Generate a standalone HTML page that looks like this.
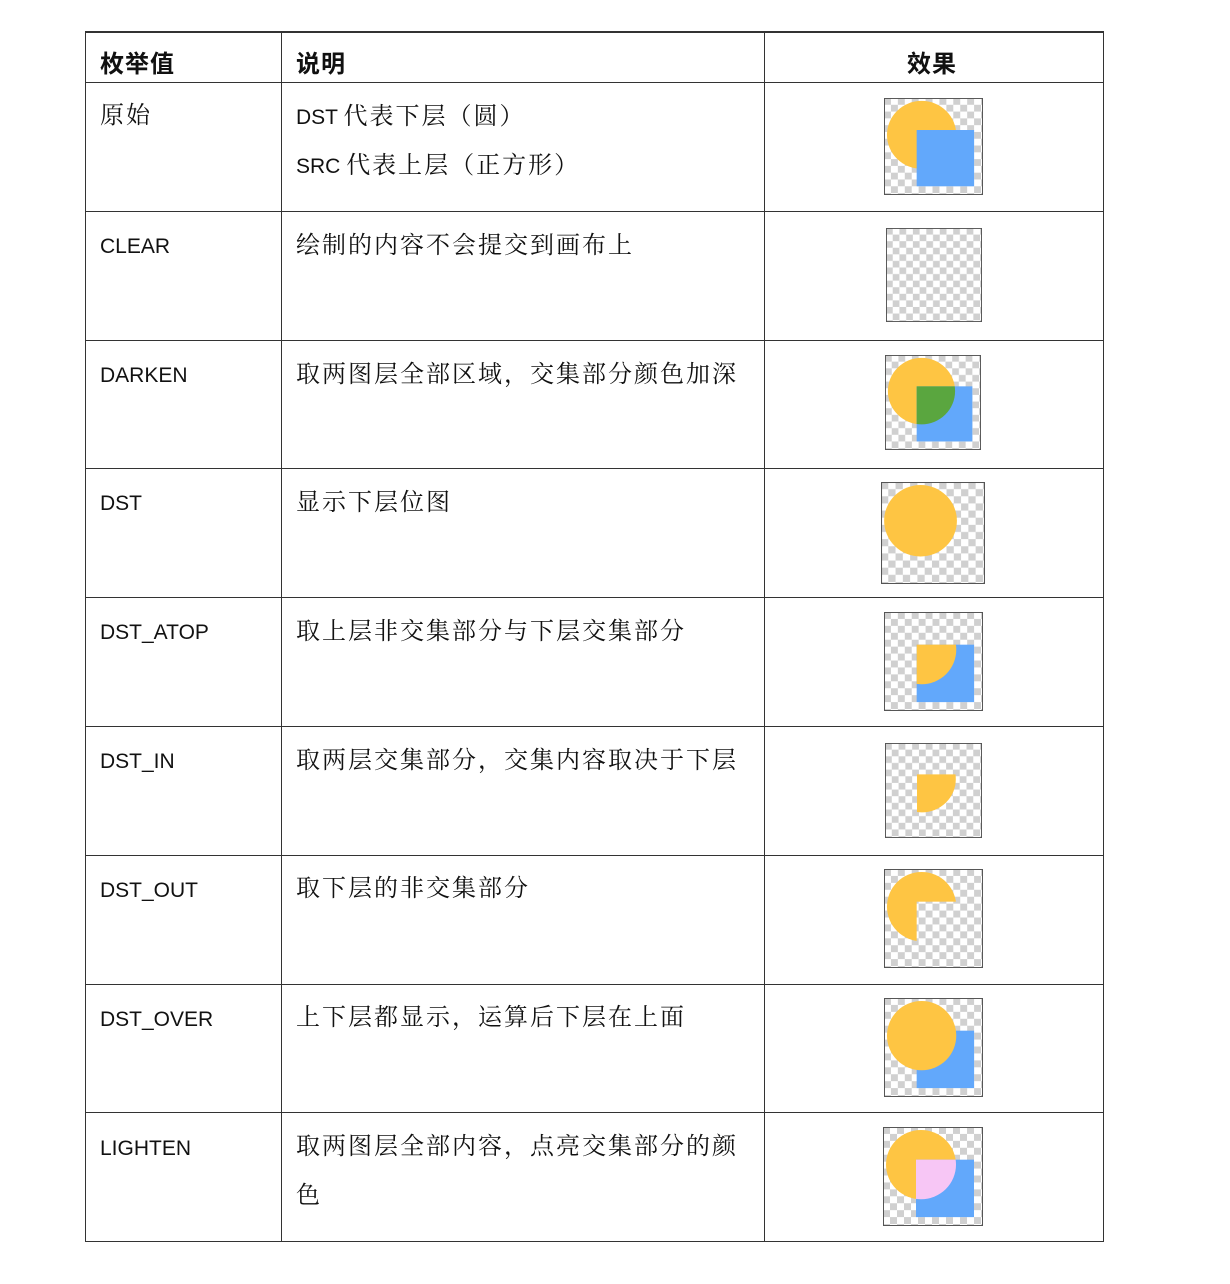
<!DOCTYPE html>
<html><head><meta charset="utf-8"><style>
body{margin:0;background:#fff;width:1230px;height:1284px;position:relative;font-family:"Liberation Sans","Noto Sans CJK SC",sans-serif;color:#111}
.hl{position:absolute;left:85px;width:1019px;height:1px;background:#333}
.vl{position:absolute;top:31px;height:1211px;width:1px;background:#333}
.t{position:absolute;font-size:21px;white-space:nowrap;line-height:30px}
.c{font-family:"Liberation Serif","Noto Serif CJK SC",serif;font-size:24px;letter-spacing:2px}
.b{font-weight:bold;font-size:24px;letter-spacing:1px}
svg{position:absolute}
</style></head><body>
<div class="hl" style="top:31px;height:2px"></div>
<div class="hl" style="top:82px"></div><div class="hl" style="top:211px"></div><div class="hl" style="top:340px"></div><div class="hl" style="top:468px"></div><div class="hl" style="top:597px"></div><div class="hl" style="top:726px"></div><div class="hl" style="top:855px"></div><div class="hl" style="top:984px"></div><div class="hl" style="top:1112px"></div><div class="hl" style="top:1241px"></div>
<div class="vl" style="left:85px"></div><div class="vl" style="left:281px"></div><div class="vl" style="left:764px"></div><div class="vl" style="left:1103px"></div>

<div class="t b" style="left:100px;top:50px">枚举值</div>
<div class="t b" style="left:296px;top:50px">说明</div>
<div class="t b" style="left:907px;top:50px">效果</div>

<div class="t c" style="left:100px;top:101px">原始</div>
<div class="t" style="left:296px;top:102px">DST <span class="c">代表下层（圆）</span></div>
<div class="t" style="left:296px;top:151px">SRC <span class="c">代表上层（正方形）</span></div>
<div class="t" style="left:100px;top:232px">CLEAR</div><div class="t c" style="left:296px;top:231px">绘制的内容不会提交到画布上</div>
<div class="t" style="left:100px;top:361px">DARKEN</div><div class="t c" style="left:296px;top:360px">取两图层全部区域，交集部分颜色加深</div>
<div class="t" style="left:100px;top:489px">DST</div><div class="t c" style="left:296px;top:488px">显示下层位图</div>
<div class="t" style="left:100px;top:618px">DST_ATOP</div><div class="t c" style="left:296px;top:617px">取上层非交集部分与下层交集部分</div>
<div class="t" style="left:100px;top:747px">DST_IN</div><div class="t c" style="left:296px;top:746px">取两层交集部分，交集内容取决于下层</div>
<div class="t" style="left:100px;top:876px">DST_OUT</div><div class="t c" style="left:296px;top:874px">取下层的非交集部分</div>
<div class="t" style="left:100px;top:1005px">DST_OVER</div><div class="t c" style="left:296px;top:1003px">上下层都显示，运算后下层在上面</div>
<div class="t" style="left:100px;top:1134px">LIGHTEN</div><div class="t c" style="left:296px;top:1132px">取两图层全部内容，点亮交集部分的颜</div>
<div class="t c" style="left:296px;top:1181px">色</div>

<svg width="0" height="0"><defs>
<pattern id="ck" width="14" height="14" patternUnits="userSpaceOnUse"><rect width="14" height="14" fill="#fff"/><rect width="7" height="7" fill="#d0d0d0"/><rect x="7" y="7" width="7" height="7" fill="#d0d0d0"/></pattern>
<clipPath id="sq"><rect x="33" y="33" width="58" height="58"/></clipPath>
<mask id="nsq"><rect width="100" height="100" fill="#fff"/><rect x="33" y="33" width="58" height="58" fill="#000"/></mask>
</defs></svg>

<svg style="left:884px;top:98px" width="99" height="97" viewBox="0 0 100 100" preserveAspectRatio="none"><rect width="100" height="100" fill="url(#ck)" stroke="#555" stroke-width="2"/><circle cx="38" cy="38" r="35" fill="#fec543"/><rect x="33" y="33" width="58" height="58" fill="#62a8fb"/></svg>
<svg style="left:886px;top:228px" width="96" height="94" viewBox="0 0 100 100" preserveAspectRatio="none"><rect width="100" height="100" fill="url(#ck)" stroke="#555" stroke-width="2"/></svg>
<svg style="left:885px;top:355px" width="96" height="95" viewBox="0 0 100 100" preserveAspectRatio="none"><rect width="100" height="100" fill="url(#ck)" stroke="#555" stroke-width="2"/><circle cx="38" cy="38" r="35" fill="#fec543"/><rect x="33" y="33" width="58" height="58" fill="#62a8fb"/><circle cx="38" cy="38" r="35" fill="#5aa63f" clip-path="url(#sq)"/></svg>
<svg style="left:881px;top:482px" width="104" height="102" viewBox="0 0 100 100" preserveAspectRatio="none"><rect width="100" height="100" fill="url(#ck)" stroke="#555" stroke-width="2"/><circle cx="38" cy="38" r="35" fill="#fec543"/></svg>
<svg style="left:884px;top:612px" width="99" height="99" viewBox="0 0 100 100" preserveAspectRatio="none"><rect width="100" height="100" fill="url(#ck)" stroke="#555" stroke-width="2"/><rect x="33" y="33" width="58" height="58" fill="#62a8fb"/><circle cx="38" cy="38" r="35" fill="#fec543" clip-path="url(#sq)"/></svg>
<svg style="left:885px;top:743px" width="97" height="95" viewBox="0 0 100 100" preserveAspectRatio="none"><rect width="100" height="100" fill="url(#ck)" stroke="#555" stroke-width="2"/><circle cx="38" cy="38" r="35" fill="#fec543" clip-path="url(#sq)"/></svg>
<svg style="left:884px;top:869px" width="99" height="99" viewBox="0 0 100 100" preserveAspectRatio="none"><rect width="100" height="100" fill="url(#ck)" stroke="#555" stroke-width="2"/><circle cx="38" cy="38" r="35" fill="#fec543" mask="url(#nsq)"/></svg>
<svg style="left:884px;top:998px" width="99" height="99" viewBox="0 0 100 100" preserveAspectRatio="none"><rect width="100" height="100" fill="url(#ck)" stroke="#555" stroke-width="2"/><rect x="33" y="33" width="58" height="58" fill="#62a8fb"/><circle cx="38" cy="38" r="35" fill="#fec543"/></svg>
<svg style="left:883px;top:1127px" width="100" height="99" viewBox="0 0 100 100" preserveAspectRatio="none"><rect width="100" height="100" fill="url(#ck)" stroke="#555" stroke-width="2"/><circle cx="38" cy="38" r="35" fill="#fec543"/><rect x="33" y="33" width="58" height="58" fill="#62a8fb"/><circle cx="38" cy="38" r="35" fill="#f7c6f5" clip-path="url(#sq)"/></svg>
</body></html>
